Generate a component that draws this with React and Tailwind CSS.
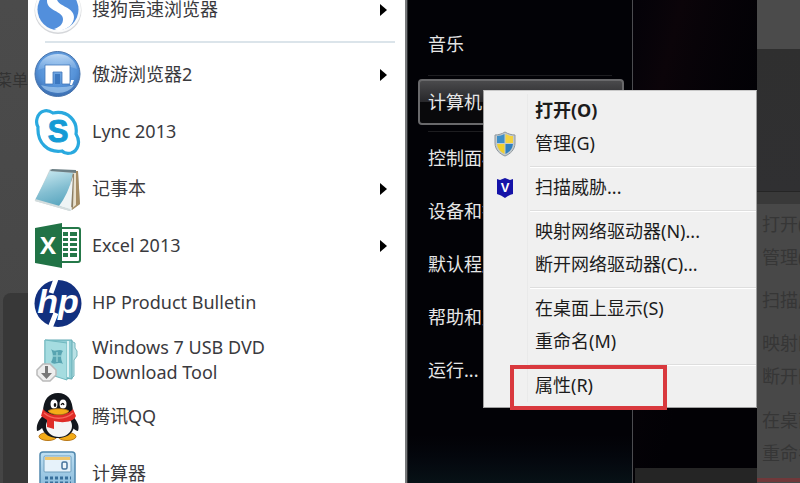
import React from "react";

const iconClass = "h-12 w-12 shrink-0";

function SogouIcon() {
  return (
    <svg viewBox="0 0 48 48" className={iconClass} aria-hidden="true">
      <circle cx="24" cy="24.5" r="23.5" fill="#d5d7da" />
      <circle cx="24" cy="23.5" r="23" fill="#fafbfc" />
      <circle cx="24" cy="23.5" r="20.5" fill="#528fdc" />
      <path d="M36 5C25 2 13 6 13 15C13 25 29 25 29 33C29 38 26 41 20 43L25 45C34 43 40 38 40 31C40 21 23 20 23 13C23 9 29 6 36 8Z" fill="#fff" />
    </svg>
  );
}

function MaxthonIcon() {
  return (
    <svg viewBox="0 0 48 48" className={iconClass} aria-hidden="true">
      <defs>
        <radialGradient id="mx" cx="50%" cy="35%" r="65%">
          <stop offset="0" stopColor="#79aee6" />
          <stop offset="0.65" stopColor="#5592d8" />
          <stop offset="1" stopColor="#3a6db0" />
        </radialGradient>
        <linearGradient id="mxs" x1="0" y1="0" x2="0" y2="1">
          <stop offset="0" stopColor="#d6e8fa" stopOpacity="0.8" />
          <stop offset="1" stopColor="#9cc5ef" stopOpacity="0.3" />
        </linearGradient>
      </defs>
      <circle cx="23.5" cy="23" r="22.5" fill="url(#mx)" stroke="#4673ac" />
      <path d="M4 19C6 8 14 3 24 3C34 3 41 9 43 18C29 13 17 14 4 19Z" fill="url(#mxs)" />
      <path d="M7 34C13 44 34 45 40 34C31 37 17 37 7 34Z" fill="#a4caef" opacity="0.7" />
      <path d="M11 14H36V33H28V21H19V33H11Z" fill="#fff" stroke="#4277b9" strokeWidth="0.8" />
      <path d="M21 23H26V33H21Z" fill="#3c78c0" />
      <path d="M37 29H40L38 34H36Z" fill="#fff" />
    </svg>
  );
}

function LyncIcon() {
  return (
    <svg viewBox="0 0 48 48" className={iconClass} aria-hidden="true">
      <path
        d="M4 19C1 14 3 5 10 3C13 2 16 3 19 5C34 2 44 13 42 26C47 34 44 43 37 45C33 46 30 45 28 43C14 45 3 35 4 19Z"
        fill="#fff"
        stroke="#29a9df"
        strokeWidth="3.2"
      />
      <text x="24" y="34" textAnchor="middle" fontFamily="Liberation Sans, sans-serif" fontWeight="700" fontSize="31" fill="#149bd5" stroke="#149bd5" strokeWidth="1">
        S
      </text>
    </svg>
  );
}

function NotepadIcon() {
  return (
    <svg viewBox="0 0 48 48" className={iconClass} aria-hidden="true">
      <defs>
        <linearGradient id="np" x1="0.3" y1="0" x2="0.6" y2="1">
          <stop offset="0" stopColor="#c5e6ee" />
          <stop offset="0.5" stopColor="#84bfd2" />
          <stop offset="1" stopColor="#51a1bb" />
        </linearGradient>
      </defs>
      <path d="M1 36L36 46L46 39L44 7L16 4Z" fill="#c9d3d5" />
      <path d="M40 6L44 6L46 39L38 45Z" fill="#a58c63" />
      <path d="M38 7L42 7L42 40L36 45Z" fill="#e8e0cd" />
      <path d="M38 8L40 9L39 43L34 40Z" fill="#8b7d63" />
      <path d="M16 6L39 8L34 28L36 45L1 35Z" fill="url(#np)" />
      <path d="M39 11Q34 29 25 41L37 45Z" fill="#eef4f5" />
      <path d="M18 4L42 5V8L16 6Z" fill="#6c7f85" />
      <path d="M1 35L36 45" stroke="#d4ddde" strokeWidth="2" />
    </svg>
  );
}

function ExcelIcon() {
  return (
    <svg viewBox="0 0 48 48" className={iconClass} aria-hidden="true">
      <rect x="24" y="6" width="22" height="34" rx="2" fill="#fff" stroke="#257849" strokeWidth="2" />
      <path
        d="M29 10H34V14H29ZM36 10H43V14H36ZM29 16H34V19H29ZM36 16H43V19H36ZM29 21H34V24H29ZM36 21H43V24H36ZM29 26H34V29H29ZM36 26H43V29H36ZM29 31H34V35H29ZM36 31H43V35H36Z"
        fill="#257849"
      />
      <path d="M1 6L28 1V46L1 41Z" fill="#217346" />
      <text x="14" y="32" textAnchor="middle" fontFamily="Open Sans, sans-serif" fontWeight="700" fontSize="24" fill="#fff">
        X
      </text>
    </svg>
  );
}

function HpIcon() {
  return (
    <svg viewBox="0 0 48 48" className={iconClass} aria-hidden="true">
      <circle cx="24" cy="24.5" r="23.5" fill="#12307f" />
      <path d="M22 0L17 14M22 34L16 49" stroke="#fff" strokeWidth="5" />
      <text x="24" y="34" textAnchor="middle" fontFamily="Liberation Sans, sans-serif" fontWeight="700" fontStyle="italic" fontSize="34" fill="#fff">
        hp
      </text>
    </svg>
  );
}

function UsbToolIcon() {
  return (
    <svg viewBox="0 0 48 48" className={iconClass} aria-hidden="true">
      <path d="M37 5L41 7V12L43 15V20L40 24V40L37 43Z" fill="#b9e1e5" stroke="#76b6bd" />
      <path d="M11 4H38V43L30 42L11 36Z" fill="#8ecdd4" stroke="#63abb4" />
      <path d="M11 4L33 7V44L11 37Z" fill="#a5dce0" stroke="#70b8bf" />
      <path d="M34 5V41" stroke="#dbf2f4" strokeWidth="2" />
      <path d="M17 13C21 17 25 12 29 15C26 19 27 24 29 28C25 25 20 30 17 26C20 22 19 17 17 13Z" fill="#58a4b1" />
      <path d="M19 20H27M23 16V26" stroke="#8fcbd1" strokeWidth="1.5" />
      <path d="M9 28H16L22 34V39L16 45H9L3 39V34Z" fill="#eeeeee" stroke="#bababa" strokeWidth="1.5" />
      <path d="M11 30H14V37H18L12.5 43L7 37H11Z" fill="#777" />
    </svg>
  );
}

function QQIcon() {
  return (
    <svg viewBox="0 0 48 48" className={iconClass} aria-hidden="true">
      <path d="M9 23C4 27 2 33 3 38C6 38 9 34 11 31M38 23C43 27 46 33 44 38C41 38 38 34 36 31" fill="#15191f" />
      <ellipse cx="14" cy="43.5" rx="9" ry="4" fill="#f3ab16" stroke="#b87718" />
      <ellipse cx="33" cy="43.5" rx="9" ry="4" fill="#f3ab16" stroke="#b87718" />
      <path d="M9 20C9 6 15 0 24 0C33 0 39 6 39 20C44 36 37 45 24 45C11 45 4 36 9 20Z" fill="#12161c" />
      <ellipse cx="25" cy="33" rx="13" ry="11" fill="#f5f5f5" />
      <ellipse cx="20" cy="11" rx="3.5" ry="4.5" fill="#fff" />
      <ellipse cx="29" cy="11" rx="3.5" ry="4.5" fill="#fff" />
      <ellipse cx="21" cy="12" rx="1.3" ry="2" fill="#111" />
      <path d="M27 12Q29 9 30 12" fill="none" stroke="#111" strokeWidth="1.3" />
      <path d="M9 16C16 24 32 24 39 16L42 23C39 30 27 30 20 28V36L13 34V27L7 23Z" fill="#df2d27" />
      <path d="M10 20C18 27 31 27 39 20" fill="none" stroke="#f8675b" strokeWidth="1.5" />
      <path d="M14 18C18 15 31 15 35 18C32 23 18 23 14 18Z" fill="#f5ad18" stroke="#b87918" strokeWidth="0.8" />
    </svg>
  );
}

function CalculatorIcon() {
  return (
    <svg viewBox="0 0 48 48" className={iconClass} aria-hidden="true">
      <defs>
        <linearGradient id="calc" x1="0" y1="0" x2="0" y2="1">
          <stop offset="0" stopColor="#bfe0f3" />
          <stop offset="1" stopColor="#78afd3" />
        </linearGradient>
      </defs>
      <rect x="6" y="2" width="35" height="46" rx="3" fill="url(#calc)" stroke="#5088ae" strokeWidth="1.5" />
      <rect x="10" y="6" width="27" height="16" rx="1" fill="#e6f2fa" stroke="#6e9ebc" />
      <path d="M11 7H36V10H11Z" fill="#efc66b" />
      <rect x="28" y="12" width="5" height="7" rx="1.5" fill="#eef6fb" stroke="#45729b" strokeWidth="1.5" />
      <path d="M11 28H37M11 33H37M11 38H37" stroke="#376f9b" strokeWidth="3" strokeDasharray="3 2" />
    </svg>
  );
}

function UacShield() {
  return (
    <svg viewBox="0 0 22 26" className="h-[26px] w-[22px]" aria-hidden="true">
      <path d="M11 1C8 3 4 4 1 4V12C1 19 6 23 11 25C16 23 21 19 21 12V4C18 4 14 3 11 1Z" fill="#c3cacd" stroke="#8f989e" />
      <path d="M10.5 3Q7 5 3 5V12H10.5Z" fill="#3f8fc8" />
      <path d="M11.500 3Q15 5 19 5V12H11.500Z" fill="#f3d23f" />
      <path d="M3 13H10.500V23Q4 20 3 13Z" fill="#f0d02f" />
      <path d="M19 13H11.500V23Q18 20 19 13Z" fill="#2f7fc0" />
    </svg>
  );
}

function VirusShield() {
  return (
    <svg viewBox="0 0 18 22" className="h-[22px] w-[18px]" aria-hidden="true">
      <path d="M1 2L4 3L9 1L14 3L17 2V17Q13 18 9 21Q5 18 1 17Z" fill="#1513a8" />
      <text x="9" y="15" textAnchor="middle" fontFamily="Liberation Sans, sans-serif" fontWeight="700" fontSize="13" fill="#fff">
        V
      </text>
    </svg>
  );
}

const programs = [
  { label: "傲游浏览器2", Icon: MaxthonIcon, more: true },
  { label: "Lync 2013", Icon: LyncIcon },
  { label: "记事本", Icon: NotepadIcon, more: true },
  { label: "Excel 2013", Icon: ExcelIcon, more: true },
  { label: "HP Product Bulletin", Icon: HpIcon },
  { label: "Windows 7 USB DVD Download Tool", Icon: UsbToolIcon },
  { label: "腾讯QQ", Icon: QQIcon },
  { label: "计算器", Icon: CalculatorIcon },
];

const contextGroups = [
  [{ label: "打开(O)", strong: true }, { label: "管理(G)", Icon: UacShield }],
  [{ label: "扫描威胁...", Icon: VirusShield }],
  [{ label: "映射网络驱动器(N)..." }, { label: "断开网络驱动器(C)..." }],
  [{ label: "在桌面上显示(S)" }, { label: "重命名(M)" }],
  [{ label: "属性(R)", marked: true }],
];

function ProgramRow({ label, Icon, more }) {
  return (
    <button type="button" className="flex h-[57px] w-full shrink-0 items-center gap-[10px] pr-[18px] pl-[6px] text-left text-[#3a3a3e]">
      <Icon />
      <span className="max-w-[210px] leading-[25px]">{label}</span>
      {more && (
        <svg viewBox="0 0 7 12" className="ml-auto h-3 w-[7px]" aria-hidden="true">
          <path d="M0 0L7 6L0 12Z" fill="#000" />
        </svg>
      )}
    </button>
  );
}

function PlaceRow({ label }) {
  return (
    <button type="button" className="block h-[53px] w-full shrink-0 pl-5 text-left whitespace-nowrap text-[#e6e6e6]">
      {label}
    </button>
  );
}

function ContextMenu() {
  return (
    <div role="menu" className="absolute top-[90px] right-0 left-[78px] border border-[#a0a0a0] border-t-[#c8c8c8] bg-[#f0f0f0] pt-[3px] pb-[5px] text-[#1c1c1c]">
      <div className="bg-linear-to-r from-transparent from-[43px] via-[#e2e3e3] via-[43px] to-transparent to-[44px]">
        {contextGroups.map((group, i) => (
          <div key={i}>
            {i > 0 && (
              <div className="flex h-[11px] items-center pt-[2px] pl-[46px]">
                <hr className="h-[2px] w-full border-0 border-t border-[#dedede] bg-white" />
              </div>
            )}
            {group.map(({ label, Icon, strong, marked }) => (
              <button key={label} type="button" role="menuitem" className="relative flex h-[33px] w-full items-center text-left whitespace-nowrap">
                <span className="flex w-[41px] shrink-0 justify-center">{Icon && <Icon />}</span>
                <span className={strong ? "pl-[10px] font-bold" : "pl-[10px]"}>{label}</span>
                {marked && <span className="absolute -top-1 -bottom-2 left-[26px] w-[157px] border-4 border-[#d9393e]" />}
              </button>
            ))}
          </div>
        ))}
      </div>
    </div>
  );
}

export default function App() {
  return (
    <div className="flex h-screen overflow-hidden bg-[#484848] font-['Noto_Sans','Noto_Sans_CJK_SC',sans-serif] text-[18px]">
      <aside className="flex w-7 shrink-0 flex-col overflow-hidden bg-linear-to-b from-[#4b4b4b] to-[#454545] pt-[68px]">
        <div className="flex h-[25px] justify-end text-base leading-[25px] whitespace-nowrap text-[#333333]">菜单</div>
        <div className="mt-[200px] ml-[3px] flex-1 rounded-tl-lg bg-[#383838]" />
      </aside>

      <main className="flex min-w-0 flex-1 flex-col overflow-hidden bg-white">
        <div className="-mt-[19px] shrink-0">
          <ProgramRow label="搜狗高速浏览器" Icon={SogouIcon} more />
        </div>
        <hr className="mt-[3px] mr-[10px] mb-[3px] ml-[17px] h-[2px] shrink-0 border-0 bg-[#dbe4ea]" />
        {programs.map((p) => (
          <ProgramRow key={p.label} {...p} />
        ))}
      </main>

      <section className="relative flex w-[352px] shrink-0 bg-[#030206]">
        <div className="flex w-[228px] flex-col overflow-hidden border-r border-l-2 border-r-[#4c4c50] border-l-[#77797b] bg-linear-to-b from-[#020206] from-90% to-[#071116]">
          <div className="-mt-[35px] flex flex-1 flex-col border-l border-[#2b2d30]">
            <PlaceRow label="图片" />
            <PlaceRow label="音乐" />
            <hr className="mx-5 mt-1 mb-[3px] border-[#1d1d20]" />
            <button type="button" className="mr-2 ml-[10px] h-[46px] rounded-[4px] border-2 border-[#69696b] bg-linear-to-b from-[#4a4a4c] via-[#27272a] via-50% to-[#09090b] to-50% pl-2 text-left whitespace-nowrap text-[#e6e6e6]">
              计算机
            </button>
            <hr className="mx-5 mt-[6px] border-[#1d1d20]" />
            <PlaceRow label="控制面板" />
            <PlaceRow label="设备和打印机" />
            <PlaceRow label="默认程序" />
            <PlaceRow label="帮助和支持" />
            <PlaceRow label="运行..." />
          </div>
        </div>
        <div className="flex flex-1 flex-col bg-linear-to-br from-[#040208] via-[#0b0409] via-20% to-[#020105] to-60% pl-[2px]">
          <div className="mt-auto h-[15px] bg-[#252525]" />
        </div>
        <ContextMenu />
      </section>

      <aside className="flex w-[43px] shrink-0 flex-col overflow-hidden whitespace-nowrap text-[#363636]">
        <div className="h-[49px] shrink-0 bg-[#4b4b4b]" />
        <div className="h-[143px] shrink-0 border-b border-[#252525] bg-linear-to-b from-[#2f2f2f] to-[#303032]" />
        <div className="h-[12px] shrink-0 bg-[#393939]" />
        <div className="flex flex-1 flex-col pt-1 pl-[5px] leading-[33px]">
          <span>打开(O)</span>
          <span>管理(G)</span>
          <span className="mt-[10px]">扫描威胁</span>
          <span className="mt-[10px]">映射网络</span>
          <span>断开网络</span>
          <span className="mt-[11px]">在桌面上</span>
          <span>重命名</span>
          <hr className="mt-2 -ml-[5px] border-t-4 border-[#70383a]" />
        </div>
      </aside>
    </div>
  );
}
